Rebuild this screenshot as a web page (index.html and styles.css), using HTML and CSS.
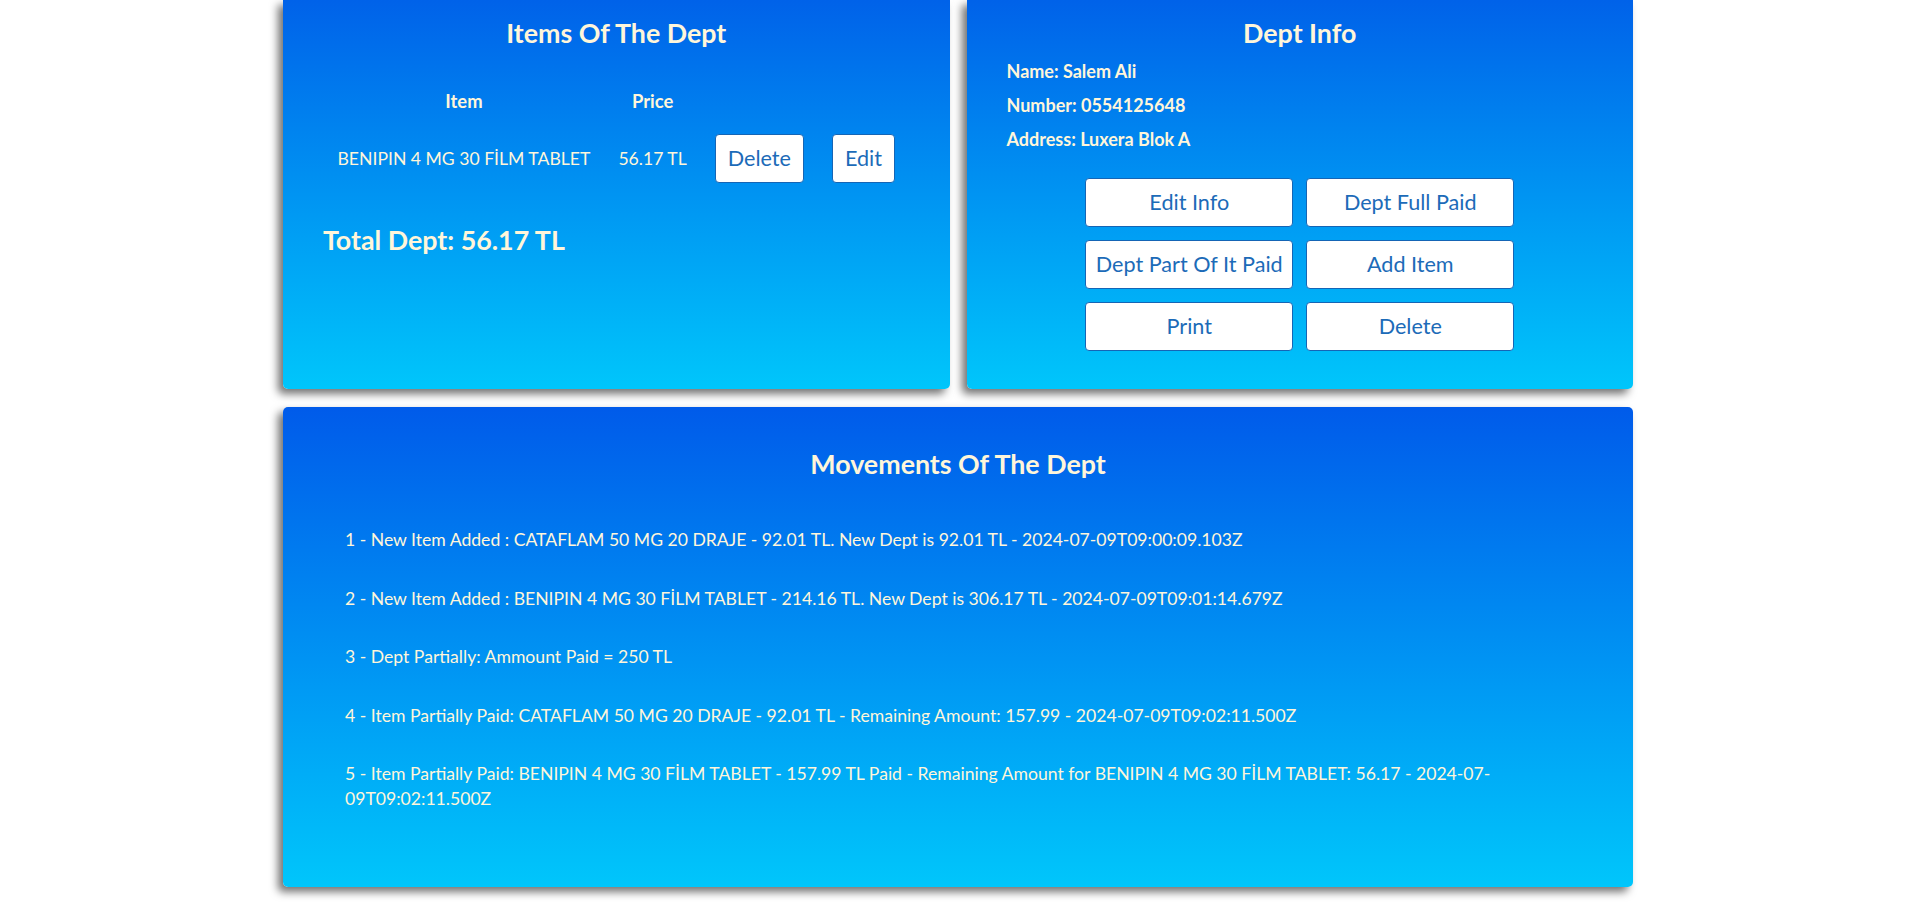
FILE: index.html
```html
<!DOCTYPE html>
<html lang="en">
<head>
<meta charset="utf-8">
<title>Dept</title>
<link rel="stylesheet" href="styles.css">
</head>
<body>
<div class="page">
  <div class="top-row">
    <section class="card card-top">
      <h2 class="card-title">Items Of The Dept</h2>
      <table class="items">
        <thead>
          <tr><th>Item</th><th>Price</th><th></th><th></th></tr>
        </thead>
        <tbody>
          <tr>
            <td>BENIPIN 4 MG 30 FİLM TABLET</td>
            <td>56.17 TL</td>
            <td><button class="btn">Delete</button></td>
            <td><button class="btn">Edit</button></td>
          </tr>
        </tbody>
      </table>
      <p class="total">Total Dept: 56.17 TL</p>
    </section>
    <section class="card card-top">
      <h2 class="card-title">Dept Info</h2>
      <div class="info">
        <p>Name: Salem Ali</p>
        <p>Number: 0554125648</p>
        <p>Address: Luxera Blok A</p>
      </div>
      <div class="actions">
        <button class="btn">Edit Info</button>
        <button class="btn">Dept Full Paid</button>
        <button class="btn">Dept Part Of It Paid</button>
        <button class="btn">Add Item</button>
        <button class="btn">Print</button>
        <button class="btn">Delete</button>
      </div>
    </section>
  </div>
  <section class="card card-bottom">
    <h2 class="card-title">Movements Of The Dept</h2>
    <ul class="moves">
      <li>1 - New Item Added : CATAFLAM 50 MG 20 DRAJE - 92.01 TL. New Dept is 92.01 TL - 2024-07-09T09:00:09.103Z</li>
      <li>2 - New Item Added : BENIPIN 4 MG 30 FİLM TABLET - 214.16 TL. New Dept is 306.17 TL - 2024-07-09T09:01:14.679Z</li>
      <li>3 - Dept Partially: Ammount Paid = 250 TL</li>
      <li>4 - Item Partially Paid: CATAFLAM 50 MG 20 DRAJE - 92.01 TL - Remaining Amount: 157.99 - 2024-07-09T09:02:11.500Z</li>
      <li>5 - Item Partially Paid: BENIPIN 4 MG 30 FİLM TABLET - 157.99 TL Paid - Remaining Amount for BENIPIN 4 MG 30 FİLM TABLET: 56.17 - 2024-07-09T09:02:11.500Z</li>
    </ul>
  </section>
</div>
</body>
</html>
```
FILE: styles.css
```css
* { box-sizing: border-box; }

body {
  margin: 0;
  padding-right: 3px;
  background: #ffffff;
  font-family: Lato, "Open Sans", sans-serif;
  color: #fff6da;
}

.page {
  width: 1350px;
  margin: 0 auto;
  padding-bottom: 20px;
}

.top-row {
  display: flex;
  gap: 17px;
}

.card {
  background: linear-gradient(to bottom, #005bea 0%, #00c6fb 100%);
  box-shadow: -5px 5px 9px rgba(0, 0, 0, 0.55);
  border-radius: 5px;
}

.card-top {
  flex: 1;
  border-radius: 0 0 5px 5px;
  padding: 16px 40px 38px;
  background: linear-gradient(to bottom, #0062e9 0%, #00c6fb 100%);
}

.card-title {
  margin: 0;
  font-size: 26.8px;
  line-height: 34px;
  font-weight: 700;
  text-align: center;
}

.items {
  margin: 33px auto 0;
  border-collapse: collapse;
}

.items th {
  padding: 8px 14px;
  font-size: 18.4px;
  line-height: 20px;
  font-weight: 700;
  text-align: center;
}

.items td {
  padding: 15px 14px;
  font-size: 17.6px;
  line-height: 20px;
  text-align: center;
}

.btn {
  font-family: Lato, "Open Sans", sans-serif;
  font-size: 21.6px;
  line-height: 25px;
  padding: 11px 12px;
  color: #1c6bb8;
  background: #ffffff;
  border: 1px solid #1565b5;
  border-radius: 4px;
}

.total {
  margin: 26px 0 0;
  font-size: 26.8px;
  line-height: 32px;
  font-weight: 700;
}

.info {
  margin-top: 10px;
  display: flex;
  flex-direction: column;
  gap: 12px;
}

.info p {
  margin: 0;
  font-size: 18px;
  line-height: 22px;
  font-weight: 700;
}

.actions {
  margin-top: 28px;
  display: grid;
  grid-template-columns: 208px 208px;
  gap: 13px;
  justify-content: center;
}

.actions .btn {
  padding-left: 6px;
  padding-right: 6px;
}

.card-bottom {
  margin-top: 18px;
  height: 480px;
  padding: 40px 40px 0;
}

.moves {
  list-style: none;
  margin: 47px 0 0;
  padding: 0 22px;
  display: flex;
  flex-direction: column;
  gap: 34px;
}

.moves li {
  font-size: 17.6px;
  line-height: 24.5px;
}
```
